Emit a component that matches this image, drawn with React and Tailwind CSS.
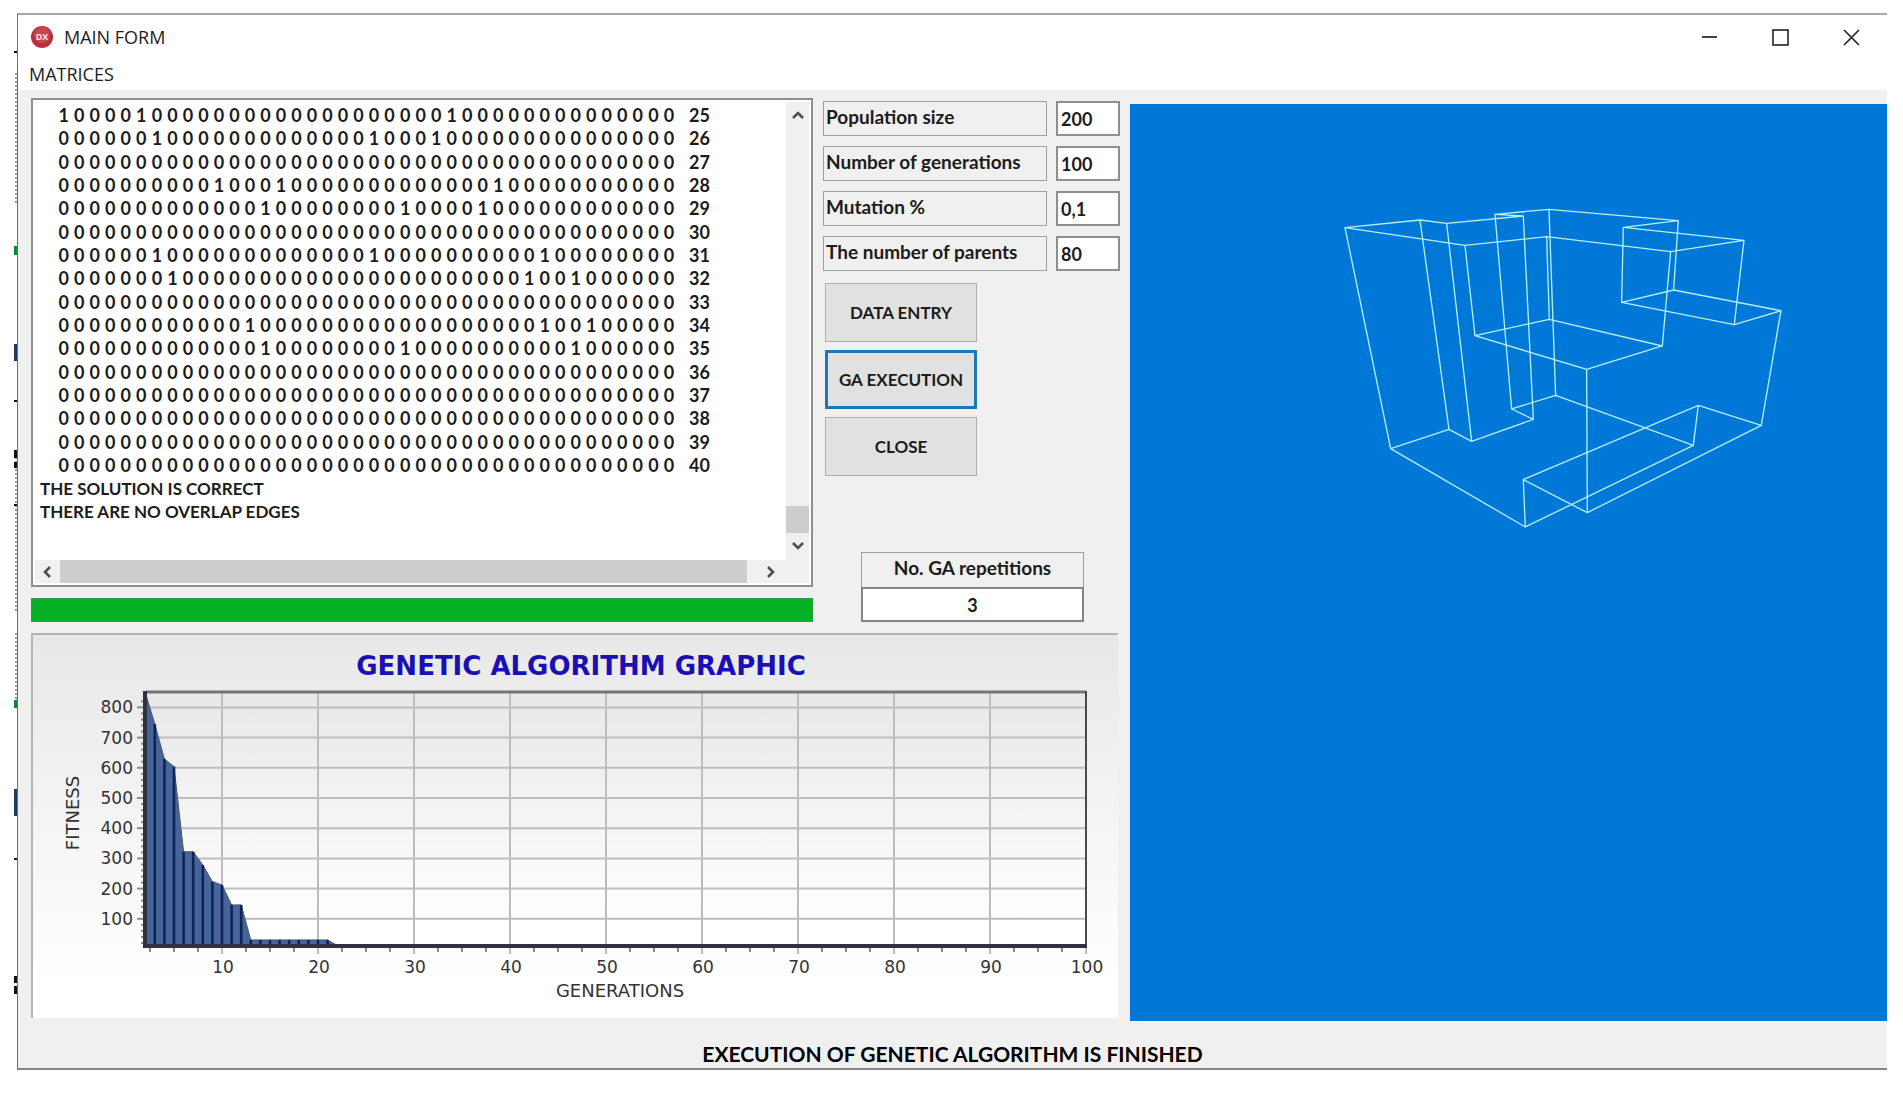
import React, { useState } from "react";

const COLS = 40;

// positions of the ones in each adjacency row, everything else is zero
const MATRIX = [
  { row: 25, ones: [0, 5, 25] },
  { row: 26, ones: [6, 20, 24] },
  { row: 27, ones: [] },
  { row: 28, ones: [10, 14, 28] },
  { row: 29, ones: [13, 22, 27] },
  { row: 30, ones: [] },
  { row: 31, ones: [6, 20, 31] },
  { row: 32, ones: [7, 30, 33] },
  { row: 33, ones: [] },
  { row: 34, ones: [12, 31, 34] },
  { row: 35, ones: [13, 22, 33] },
  { row: 36, ones: [] },
  { row: 37, ones: [] },
  { row: 38, ones: [] },
  { row: 39, ones: [] },
  { row: 40, ones: [] },
];

const PARAMS = [
  { id: "population", label: "Population size", value: "200" },
  { id: "generations", label: "Number of generations", value: "100" },
  { id: "mutation", label: "Mutation %", value: "0,1" },
  { id: "parents", label: "The number of parents", value: "80" },
];

const App = () => {
  const [params, setParams] = useState(PARAMS);
  const [repetitions, setRepetitions] = useState("3");

  const updateParam = (id, value) => {
    setParams(params.map((p) => (p.id === id ? { ...p, value } : p)));
  };

  return (
    <div className="min-h-screen bg-white pt-[13px] pl-[14px] pr-4 flex items-start font-[Lato,sans-serif] text-[#1c1c1c]">
      <DesktopEdge />
      <div className="flex-1 min-w-0 border-t-2 border-l border-b-2 border-t-[#a8a8a8] border-l-[#6e6e6e] border-b-[#858585] bg-[#f0f0f0]">
        <TitleBar />

        <main className="pt-2 pl-[13px]">
          <div className="grid grid-cols-[1089fr_757fr] gap-[10px]">
            <div className="min-w-0">
              <div className="flex gap-[10px]">
                <div className="flex-1 min-w-0">
                  <Memo />
                  <div
                    role="progressbar"
                    aria-label="Progress"
                    aria-valuenow={100}
                    className="mt-[11px] h-6 bg-[#06b025] border border-[#2f9c42]"
                  />
                </div>

                <form className="w-[297px] shrink-0 pt-[3px] flex flex-col" onSubmit={(e) => e.preventDefault()}>
                  <div className="grid grid-cols-[224px_64px] gap-x-[9px] gap-y-[10px]">
                    {params.map((p) => (
                      <React.Fragment key={p.id}>
                        <label
                          htmlFor={p.id}
                          className="h-[35px] border border-[#a0a0a0] px-[2px] text-[19px] leading-[29px] font-bold whitespace-nowrap"
                        >
                          {p.label}
                        </label>
                        <input
                          id={p.id}
                          value={p.value}
                          onChange={(e) => updateParam(p.id, e.target.value)}
                          className="w-full h-[35px] border-2 border-[#8f8f8f] bg-white px-[3px] text-[18px] font-bold outline-none"
                        />
                      </React.Fragment>
                    ))}
                  </div>

                  <div className="mt-3 ml-[2px] w-[152px] flex flex-col gap-2">
                    <button type="button" className="h-[59px] border border-[#adadad] bg-[#e1e1e1] text-[17px] font-bold">
                      DATA ENTRY
                    </button>
                    <button type="submit" className="h-[59px] border-3 border-[#1f78ad] bg-[#e1e1e1] text-[17px] font-bold">
                      GA EXECUTION
                    </button>
                    <button type="button" className="h-[59px] border border-[#adadad] bg-[#e1e1e1] text-[17px] font-bold">
                      CLOSE
                    </button>
                  </div>

                  <div className="mt-auto ml-[38px] w-[223px] flex flex-col">
                    <label
                      htmlFor="repetitions"
                      className="h-[35px] border border-b-0 border-[#a0a0a0] text-center text-[19px] leading-[29px] font-bold"
                    >
                      No. GA repetitions
                    </label>
                    <input
                      id="repetitions"
                      value={repetitions}
                      onChange={(e) => setRepetitions(e.target.value)}
                      className="h-[35px] border-2 border-[#858585] bg-white text-center text-[18px] font-bold outline-none"
                    />
                  </div>
                </form>
              </div>

              <FitnessChart />
            </div>

            <Viewport />
          </div>

          <p className="pt-[21px] pr-[13px] text-center text-[21px] leading-7 font-bold text-black">
            EXECUTION OF GENETIC ALGORITHM IS FINISHED
          </p>
        </main>
      </div>
    </div>
  );
};

// slice of the windows lying behind the form
const DesktopEdge = () => (
  <svg width="3" height="1058" className="shrink-0" aria-hidden="true">
    <path d="M2 60V190M2 440V600M2 620V690" stroke="#9a9a9a" strokeWidth="2" strokeDasharray="2 2" />
    <rect y="38" width="3" height="2" fill="#111" />
    <rect y="233" width="3" height="9" fill="#0b8a2c" />
    <rect y="331" width="3" height="17" fill="#1f3864" />
    <rect y="387" width="3" height="2" fill="#111" />
    <rect y="437" width="3" height="8" fill="#111" />
    <rect y="449" width="3" height="6" fill="#111" />
    <rect y="491" width="3" height="2" fill="#111" />
    <rect y="687" width="3" height="8" fill="#0b8a2c" />
    <rect y="776" width="3" height="27" fill="#1f3864" />
    <rect y="845" width="3" height="2" fill="#111" />
    <rect y="963" width="3" height="7" fill="#111" />
    <rect y="973" width="3" height="8" fill="#111" />
  </svg>
);

const TitleBar = () => (
  <header className="bg-white font-['Open_Sans',sans-serif]">
    <div className="h-11 pl-[13px] flex items-center">
      <svg width="22" height="22" viewBox="0 0 22 22" className="mr-[11px]" aria-hidden="true">
        <circle cx="11" cy="11" r="11" fill="#b8303c" />
        <circle cx="11" cy="9" r="8" fill="#cc4450" />
        <text x="11" y="14" textAnchor="middle" fontSize="9" fontWeight="700" fill="#fbe4e6" fontFamily="Open Sans, sans-serif">
          DX
        </text>
      </svg>
      <h1 className="text-[18px]">MAIN FORM</h1>
      <div className="ml-auto flex">
        <button type="button" aria-label="Minimize" className="w-[71px] h-11 flex items-center justify-center">
          <svg width="17" height="17" viewBox="0 0 17 17">
            <path d="M1 8H16" stroke="#444" strokeWidth="2" />
          </svg>
        </button>
        <button type="button" aria-label="Maximize" className="w-[71px] h-11 flex items-center justify-center">
          <svg width="17" height="17" viewBox="0 0 17 17">
            <rect x="1" y="1" width="15" height="15" fill="none" stroke="#222" strokeWidth="1.6" />
          </svg>
        </button>
        <button type="button" aria-label="Close" className="w-[71px] h-11 flex items-center justify-center">
          <svg width="17" height="17" viewBox="0 0 17 17">
            <path d="M1 1L16 16M16 1L1 16" stroke="#222" strokeWidth="1.6" />
          </svg>
        </button>
      </div>
    </div>
    <nav className="h-[31px] pl-[11px] flex items-center">
      <button type="button" className="text-[18px]">
        MATRICES
      </button>
    </nav>
  </header>
);

const Memo = () => (
  <section className="h-[489px] border-2 border-[#8f8f8f] bg-white p-[2px] grid grid-cols-[minmax(0,1fr)_23px] grid-rows-[minmax(0,1fr)_23px]">
    <div className="overflow-hidden pt-[2px] pl-[5px] text-[18px] leading-[23px] font-bold">
      <table className="ml-4 w-[656px] h-[373px] table-fixed">
        <colgroup>
          <col span={COLS} />
          <col className="w-[35px]" />
        </colgroup>
        <tbody>
          {MATRIX.map(({ row, ones }) => (
            <tr key={row}>
              {Array.from({ length: COLS }, (_, i) => (
                <td key={i} className="p-0 text-center">
                  {ones.includes(i) ? 1 : 0}
                </td>
              ))}
              <th scope="row" className="p-0 pr-[2px] text-right">
                {row}
              </th>
            </tr>
          ))}
        </tbody>
      </table>
      <p className="text-[17px]">THE SOLUTION IS CORRECT</p>
      <p className="text-[17px]">THERE ARE NO OVERLAP EDGES</p>
    </div>

    <div className="bg-[#f0f0f0] pt-[2px] pb-1 flex flex-col">
      <ScrollButton label="Scroll up" d="M2 9L7 4L12 9" />
      <div className="flex-1" />
      <div className="h-[27px] bg-[#cdcdcd]" />
      <ScrollButton label="Scroll down" d="M2 5L7 10L12 5" />
    </div>

    <div className="bg-[#f0f0f0] pr-1 flex">
      <ScrollButton label="Scroll left" d="M9 2L4 7L9 12" />
      <div className="flex-1 bg-[#cdcdcd]" />
      <div className="w-[10px]" />
      <ScrollButton label="Scroll right" d="M5 2L10 7L5 12" />
    </div>
    <div className="bg-[#f0f0f0]" />
  </section>
);

const ScrollButton = ({ label, d }) => (
  <button type="button" aria-label={label} className="min-w-[25px] min-h-[23px] self-center flex items-center justify-center">
    <svg width="14" height="14" viewBox="0 0 14 14">
      <path d={d} fill="none" stroke="#505050" strokeWidth="2.6" />
    </svg>
  </button>
);

const X_LEFT = 113;
const X_RIGHT = 1053;
const Y_TOP = 57;
const Y_BOTTOM = 311;
const xOf = (gen) => 189 + (gen - 10) * 9.6;
const yOf = (fit) => 314 - fit * 0.302;

const FITNESS = [
  [2, 850], [3, 745], [4, 629], [5, 604], [6, 322], [7, 322], [8, 278], [9, 223], [10, 212],
  [11, 146], [12, 146], [13, 30], [14, 30], [15, 30], [16, 30], [17, 30], [18, 30], [19, 30],
  [20, 30], [21, 30], [22, 12],
];

const FitnessChart = () => {
  const line = FITNESS.map(([g, f]) => `${xOf(g)},${yOf(f)}`).join(" ");
  const tens = [10, 20, 30, 40, 50, 60, 70, 80, 90, 100];
  const hundreds = [100, 200, 300, 400, 500, 600, 700, 800];
  const minorX = Array.from({ length: 39 }, (_, i) => 2.5 * (i + 1)).filter((g) => g % 10 !== 0);
  const minorY = Array.from({ length: 41 }, (_, i) => 20 * (i + 1)).filter((f) => f % 100 !== 0);

  return (
    <section className="mt-[11px] mr-[2px] border-t-2 border-l-2 border-[#b4b4b4] bg-linear-to-b from-[#e8e8e8] to-white to-90%">
      <svg viewBox="0 0 1085 383" className="block w-full h-auto" fontFamily="DejaVu Sans, sans-serif" role="img" aria-label="Fitness by generation">
        <defs>
          <linearGradient id="plot" x1="0" y1="0" x2="0" y2="1">
            <stop offset="0" stopColor="#e8e8e8" />
            <stop offset="0.9" stopColor="#ffffff" />
          </linearGradient>
        </defs>
        <text x="548" y="40" textAnchor="middle" fontSize="26" fontWeight="700" fill="#1a0fb4">
          GENETIC ALGORITHM GRAPHIC
        </text>

        <rect x={X_LEFT} y={Y_TOP} width={X_RIGHT - X_LEFT} height={Y_BOTTOM - Y_TOP} fill="url(#plot)" />
        {hundreds.map((f) => (
          <path key={f} d={`M${X_LEFT} ${yOf(f)}H${X_RIGHT}`} stroke="#bdbdbd" strokeWidth="2" />
        ))}
        {tens.map((g) => (
          <path key={g} d={`M${xOf(g)} ${Y_TOP}V${Y_BOTTOM + 8}`} stroke="#bdbdbd" strokeWidth="2" />
        ))}

        {/* ticks */}
        <g stroke="#8c8c8c" strokeWidth="2">
          {hundreds.map((f) => (
            <path key={f} d={`M${X_LEFT - 9} ${yOf(f)}h8`} />
          ))}
          {minorY.map((f) => (
            <path key={f} d={`M${X_LEFT - 5} ${yOf(f)}h4`} />
          ))}
          {minorX.map((g) => (
            <path key={g} d={`M${xOf(g)} ${Y_BOTTOM + 1}v5`} />
          ))}
        </g>

        {/* fitness area */}
        <polygon points={`${xOf(2)},${Y_BOTTOM} ${line}`} fill="#48659a" stroke="#4d5563" strokeWidth="1" />
        {FITNESS.map(([g, f]) => (
          <path key={g} d={`M${xOf(g)} ${yOf(f)}V${Y_BOTTOM}`} stroke="#0c2458" strokeWidth="2.6" />
        ))}

        <path d={`M${X_LEFT} ${Y_TOP}H${X_RIGHT}`} stroke="#757575" strokeWidth="3" />
        <path d={`M${X_RIGHT} ${Y_TOP - 1}V${Y_BOTTOM}`} stroke="#4a4a4a" strokeWidth="2" />
        <path d={`M${X_LEFT - 1} ${Y_TOP - 1}V${Y_BOTTOM}H${X_RIGHT + 1}`} fill="none" stroke="#2f333d" strokeWidth="4" />

        <g fontSize="17" fill="#333">
          {hundreds.map((f) => (
            <text key={f} x="100" y={yOf(f) + 6} textAnchor="end">
              {f}
            </text>
          ))}
          {tens.map((g) => (
            <text key={g} x={xOf(g) + 1} y="338" textAnchor="middle">
              {g}
            </text>
          ))}
        </g>
        <g fontSize="18" fill="#333">
          <text x="587" y="362" textAnchor="middle">
            GENERATIONS
          </text>
          <text transform="translate(46 178) rotate(-90)" textAnchor="middle">
            FITNESS
          </text>
        </g>
      </svg>
    </section>
  );
};

// wireframe preview of the solved solid
const Viewport = () => (
  <section className="mt-[6px] -mb-[2px] bg-[#0078d7]">
    <svg viewBox="0 0 757 917" className="block w-full h-auto" role="img" aria-label="Wireframe solid">
      <g transform="translate(170 76) scale(0.3333)" fill="none" stroke="#b4f0ee" strokeWidth="4" strokeLinejoin="round">
        {/* floor and front step */}
        <path d="M272 806L447 748L515 784L700 718L635 687L767 646L1180 796L676 1041Z" />
        <path d="M670 899L1195 676L1384 736L862 998ZM670 899L676 1041M1195 676L1180 796" />
        {/* top faces */}
        <path d="M135 143L360 120L440 130L670 108L585 103L747 88L1135 122L970 142L1332 181L1112 215L740 170L495 196Z" />
        {/* uprights */}
        <path d="M272 806L135 143M447 748L360 120M515 784L440 130M700 718L670 108M635 687L585 103M767 646L747 88M1384 736L1443 392M862 998L860 568" />
        {/* right notch */}
        <path d="M965 367L1121 330L1443 392L1303 434ZM970 142L965 367M1332 181L1303 434M1135 122L1121 330" />
        {/* inner recess */}
        <path d="M525 467L748 418L1087 498L860 568ZM495 196L525 467M740 170L748 418M1112 215L1087 498" />
      </g>
    </svg>
  </section>
);

export default App;
